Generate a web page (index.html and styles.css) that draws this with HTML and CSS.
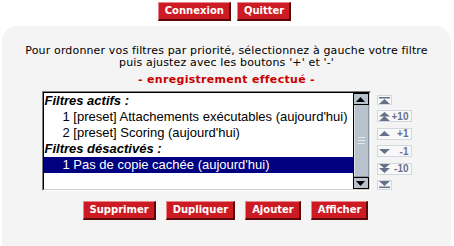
FILE: index.html
```html
<!DOCTYPE html>
<html lang="fr">
<head>
<meta charset="utf-8">
<title>Filtres</title>
<link rel="stylesheet" href="styles.css">
</head>
<body>
<div class="top">
  <span class="btn">Connexion</span>
  <span class="btn">Quitter</span>
</div>
<div class="panel">
  <p class="intro">Pour ordonner vos filtres par priorité, sélectionnez à gauche votre filtre<br>puis ajustez avec les boutons '+' et '-'</p>
  <p class="status">- enregistrement effectué -</p>
  <div class="row">
    <div class="listbox">
      <div class="inner">
        <div class="items">
          <div class="item group">Filtres actifs :</div>
          <div class="item sub">1 [preset] Attachements exécutables (aujourd'hui)</div>
          <div class="item sub">2 [preset] Scoring (aujourd'hui)</div>
          <div class="item group">Filtres désactivés :</div>
          <div class="item sub selected">1 Pas de copie cachée (aujourd'hui)</div>
        </div>
        <div class="scrollbar">
          <div class="sb-btn"><svg width="9" height="5" viewBox="0 0 9 5"><polygon points="4.5,0 9,5 0,5" fill="#000"/></svg></div>
          <div class="sb-thumb"><span class="grip"></span><span class="grip"></span><span class="grip"></span></div>
          <div class="sb-btn"><svg width="9" height="5" viewBox="0 0 9 5"><polygon points="0,0 9,0 4.5,5" fill="#000"/></svg></div>
        </div>
      </div>
    </div>
    <div class="moves">
      <span class="mv icon-only h9"><svg width="11" height="7" viewBox="0 0 11 7"><rect x="0" y="0" width="11" height="1.5" fill="#66718a"/><polygon points="5.5,2 11,7 0,7" fill="#66718a"/></svg></span>
      <span class="mv"><svg width="11" height="9" viewBox="0 0 11 9"><polygon points="5.5,0 11,4.5 0,4.5" fill="#66718a"/><polygon points="5.5,4 11,9 0,9" fill="#66718a"/></svg><span class="lbl">+10</span></span>
      <span class="mv"><svg width="11" height="5" viewBox="0 0 11 5"><polygon points="5.5,0 11,5 0,5" fill="#66718a"/></svg><span class="lbl">+1</span></span>
      <span class="mv"><svg width="11" height="5" viewBox="0 0 11 5"><polygon points="0,0 11,0 5.5,5" fill="#66718a"/></svg><span class="lbl">-1</span></span>
      <span class="mv"><svg width="11" height="9" viewBox="0 0 11 9"><polygon points="0,0 11,0 5.5,4.5" fill="#66718a"/><polygon points="0,4 11,4 5.5,9" fill="#66718a"/></svg><span class="lbl">-10</span></span>
      <span class="mv icon-only h9"><svg width="11" height="7" viewBox="0 0 11 7"><polygon points="0,0 11,0 5.5,5" fill="#66718a"/><rect x="0" y="5.5" width="11" height="1.5" fill="#66718a"/></svg></span>
    </div>
  </div>
  <div class="actions">
    <span class="btn">Supprimer</span>
    <span class="btn">Dupliquer</span>
    <span class="btn">Ajouter</span>
    <span class="btn">Afficher</span>
  </div>
</div>
</body>
</html>
```
FILE: styles.css
```css
html, body {
  margin: 0;
  padding: 0;
  background: #ffffff;
  font-family: "DejaVu Sans", Verdana, sans-serif;
  overflow: hidden;
}

.top {
  display: flex;
  justify-content: center;
  gap: 6px;
  padding: 2px 5px 0 0;
}

.btn {
  display: inline-block;
  box-sizing: border-box;
  height: 19px;
  line-height: 16px;
  padding: 0 5px 0 6px;
  background: #cd1b23;
  color: #ffffff;
  font-family: "DejaVu Sans", Verdana, sans-serif;
  font-weight: bold;
  font-size: 10px;
  border-style: solid;
  border-width: 1px 2px 2px 1px;
  border-color: #e9868a #5c0709 #5c0709 #e9868a;
  white-space: nowrap;
}

.panel {
  margin: 5px 3px 0 2px;
  background: #f4f4f4;
  border-radius: 15px 15px 0 0;
  padding-top: 19px;
  height: 220px;
  box-sizing: border-box;
}

.intro {
  margin: 0;
  text-align: center;
  font-size: 11px;
  letter-spacing: 0.15px;
  line-height: 12px;
  color: #000;
}

.status {
  margin: 5px 0 0;
  text-align: center;
  font-size: 11px;
  letter-spacing: 0.3px;
  line-height: 12px;
  font-weight: bold;
  color: #c80000;
}

.row {
  display: flex;
  justify-content: center;
  gap: 6px;
  margin-top: 5px;
}

.listbox {
  box-sizing: border-box;
  width: 329px;
  height: 100px;
  border: 1px solid;
  border-color: #808080 #ffffff #ffffff #808080;
}

.inner {
  box-sizing: border-box;
  height: 100%;
  display: flex;
  border: 1px solid;
  border-color: #000000 #d4d0c8 #d4d0c8 #000000;
  background: #ffffff;
}

.items {
  flex: 1;
  font-family: "Liberation Sans", Arial, sans-serif;
  font-size: 13px;
  line-height: 16px;
  color: #000;
  overflow: hidden;
}

.item {
  white-space: nowrap;
  padding-left: 1px;
}

.item.group {
  font-weight: bold;
  font-style: italic;
}

.item.sub {
  padding-left: 19px;
}

.item.selected {
  background: #000080;
  color: #ffffff;
}

.scrollbar {
  width: 15px;
  display: flex;
  flex-direction: column;
  background: #b8c2cc;
  border-left: 1px solid #000;
}

.sb-btn {
  box-sizing: border-box;
  height: 12px;
  display: flex;
  align-items: center;
  justify-content: center;
  background: #b8c2cc;
  border: 1px solid #000;
  border-left: 0;
}

.sb-btn svg {
  display: block;
}

.sb-thumb {
  flex: 1;
  display: flex;
  flex-direction: column;
  justify-content: center;
  align-items: center;
  gap: 2px;
  background: #b8c2cc;
  border-left: 1px solid #dde2e7;
  border-right: 1px solid #8a949e;
  border-bottom: 1px solid #8a949e;
}

.grip {
  display: block;
  width: 7px;
  height: 1px;
  background: #e4e8ec;
}

.moves {
  width: 35px;
  height: 100px;
  box-sizing: border-box;
  padding: 4px 0 1px;
  display: flex;
  flex-direction: column;
  justify-content: space-between;
  align-items: flex-start;
}

.mv {
  box-sizing: border-box;
  width: 35px;
  height: 12px;
  display: flex;
  align-items: center;
  justify-content: space-between;
  padding: 0 2px 0 1px;
  border: 1px solid #d2d6de;
  background: #f9f9fa;
  font-family: "Liberation Sans", Arial, sans-serif;
  font-weight: bold;
  font-size: 10px;
  color: #66718a;
}

.mv.icon-only {
  width: 15px;
  justify-content: center;
  padding: 0;
}

.mv.h9 {
  height: 10px;
}

.mv svg {
  display: block;
}

.actions {
  display: flex;
  justify-content: center;
  gap: 10px;
  margin-top: 10px;
  padding-right: 2px;
}
```
